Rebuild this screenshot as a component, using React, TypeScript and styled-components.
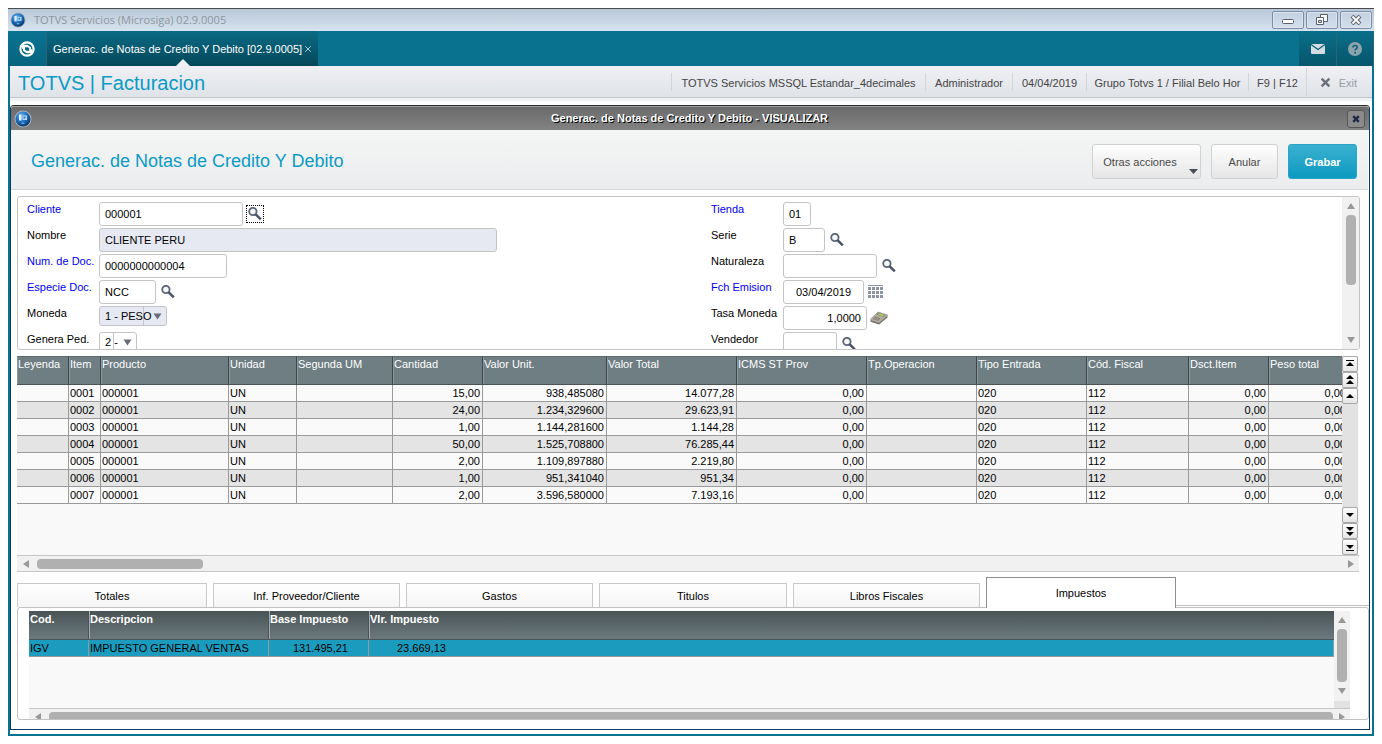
import React from "react";
import styled, { createGlobalStyle, css } from "styled-components";

const GlobalStyle = createGlobalStyle`
  *, *::before, *::after { box-sizing: border-box; }
  body {
    margin: 8px;
    background: #fff;
    color: #000;
    font-family: "Liberation Sans", Arial, Helvetica, sans-serif;
    font-size: 11px;
    line-height: 16px;
  }
  button, input, select {
    margin: 0;
    padding: 0;
    font: inherit;
    color: inherit;
    border-radius: 0;
  }
  button { cursor: pointer; }
  h1, h2 { margin: 0; font-weight: normal; }
  svg { display: block; flex: none; }
`;

/* ---------- window frame ---------- */

const Window = styled.div`
  border-top: 1px solid #4a4d50;
  min-width: 900px;
`;

const TitleBar = styled.header`
  display: flex;
  align-items: center;
  height: 22px;
  padding: 0 2px;
  background: linear-gradient(#b9c8d7, #d6e3f0);
`;

const TitleText = styled.span`
  flex: 1;
  margin-left: 8px;
  color: #8f969e;
  font-family: "Open Sans", "Noto Sans", sans-serif;
  font-size: 11px;
`;

const WindowControls = styled.div`
  display: flex;
  gap: 2px;
`;

const ControlButton = styled.button`
  display: flex;
  align-items: center;
  justify-content: center;
  width: 32px;
  height: 18px;
  border: 1px solid #7d8ba5;
  border-radius: 2px;
  background: linear-gradient(#c3d0df, #d3dfec);
  box-shadow: inset 0 0 0 1px #dde6f0;
`;

const TabBar = styled.nav`
  display: flex;
  align-items: stretch;
  height: 35px;
  background: #09728f;
`;

const BarButton = styled.button<{ $width: number; $dark?: boolean }>`
  display: flex;
  align-items: center;
  justify-content: center;
  width: ${(p) => p.$width}px;
  border: 0;
  border-right: 1px solid #2a6478;
  background: ${(p) => (p.$dark ? "linear-gradient(#0a6e89, #06566c)" : "linear-gradient(#0a7391, #07647f)")};
`;

const ProgramTab = styled.div`
  position: relative;
  display: flex;
  align-items: center;
  width: 271px;
  padding-left: 6px;
  background: linear-gradient(#0a6a84, #06485a);
  color: #fff;
  white-space: nowrap;

  &::after {
    content: "";
    position: absolute;
    left: 50%;
    bottom: 0;
    margin-left: -7px;
    border: 7px solid transparent;
    border-top: 0;
    border-bottom-color: #f0f1f4;
  }
`;

const TabClose = styled.button`
  display: flex;
  align-items: center;
  flex: none;
  height: 12px;
  margin-left: auto;
  margin-right: 6px;
  border: 0;
  background: none;
  color: #b9d0d8;
`;

const Spacer = styled.div`
  flex: 1;
`;

const Frame = styled.main`
  border: 2px solid #09728f;
  border-top: 0;
  padding-bottom: 4px;
`;

const ModuleBar = styled.div`
  display: flex;
  align-items: stretch;
  height: 35px;
  padding: 0 0 3px;
  background: #f0f1f3;
`;

const ModuleBarInner = styled.div`
  display: flex;
  flex: 1;
  align-items: center;
  padding-left: 8px;
  border-bottom: 1px solid #c0c6cc;
  background: linear-gradient(#f0f0f4, #dfe3e8);
`;

const ModuleTitle = styled.h1`
  flex: 1;
  padding-top: 2px;
  color: #0b9bc4;
  font-size: 20px;
  line-height: 24px;
  white-space: nowrap;
`;

const StatusItem = styled.span<{ $width: number }>`
  min-width: ${(p) => p.$width}px;
  height: 18px;
  line-height: 20px;
  border-left: 1px solid #d3d6d9;
  text-align: center;
  color: #444;
  white-space: nowrap;
`;

const ExitButton = styled.button`
  display: flex;
  align-items: center;
  justify-content: space-between;
  width: 66px;
  height: 28px;
  padding: 2px 15px 0 13px;
  border: 0;
  border-left: 1px solid #d3d6d9;
  background: none;
  color: #999da3;
`;

/* ---------- dialog ---------- */

const Dialog = styled.section`
  margin: 4px 2px 0 0;
  border: 1px solid #0b3a66;
  border-top-color: #2d2d2d;
  border-radius: 4px 4px 0 0;
  padding-bottom: 9px;
`;

const DialogBar = styled.div`
  display: flex;
  align-items: center;
  height: 24px;
  padding: 0 4px 0 3px;
  border-top: 1px solid #a0a0a0;
  border-radius: 3px 3px 0 0;
  background: linear-gradient(#6b6b6b, #828282);
`;

const DialogCaption = styled.span`
  flex: 1;
  line-height: 14px;
  padding-bottom: 2px;
  text-align: center;
  color: #fff;
  font-weight: bold;
  text-shadow: 1px 1px 0 #000;
`;

const DialogClose = styled.button`
  display: flex;
  align-items: center;
  justify-content: center;
  width: 18px;
  height: 18px;
  border: 1px solid #555;
  border-radius: 3px;
  background: #8b8b8b;
`;

const DialogHeader = styled.div`
  display: flex;
  align-items: center;
  gap: 10px;
  height: 60px;
  margin-right: 1px;
  padding: 0 11px 0 20px;
  border-bottom: 1px solid #d5d6d8;
  background: linear-gradient(#f4f6f5, #ebecee);
`;

const DialogTitle = styled.h2`
  flex: 1;
  padding-top: 2px;
  color: #0b9bc4;
  font-size: 18px;
  line-height: 24px;
`;

const ActionButton = styled.button<{ $width: number; $primary?: boolean; $menu?: boolean }>`
  position: relative;
  width: ${(p) => p.$width}px;
  height: 35px;
  margin-top: 4px;
  border: 1px solid #d0d1d2;
  border-radius: 3px;
  background: linear-gradient(#fefefe, #e6e6e6);
  color: #4a4a4a;
  ${(p) => p.$menu && css`padding-right: 13px;`}
  ${(p) =>
    p.$primary &&
    css`
      border-color: #2aa3c6;
      background: linear-gradient(#3bb0d0, #0c9ac0);
      color: #fff;
      font-weight: bold;
    `}
`;

const MenuMark = styled.svg`
  position: absolute;
  right: 2px;
  bottom: 4px;
`;

const Body = styled.div`
  padding: 6px 0 0 6px;
`;

/* ---------- form ---------- */

const FormBox = styled.form`
  display: flex;
  height: 154px;
  margin-right: 9px;
  border: 1px solid #c2c4c6;
  border-radius: 3px;
  overflow: hidden;
`;

const FormGrid = styled.div`
  display: grid;
  flex: 1;
  grid-template-columns: minmax(0, 684px) 1fr;
  padding: 5px 0 0 9px;
`;

const FormColumn = styled.div`
  display: flex;
  flex-direction: column;
  gap: 2px;
`;

const FieldRow = styled.div`
  display: flex;
  flex: none;
  height: 24px;
`;

const FieldLabel = styled.label<{ $required?: boolean }>`
  width: 72px;
  line-height: 14px;
  white-space: nowrap;
  color: ${(p) => (p.$required ? "#0000f0" : "#000")};
`;

const FieldControls = styled.div`
  display: flex;
  align-items: center;
  align-self: flex-start;
  gap: 3px;
`;

const TextBox = styled.input<{ $width: number; $align?: string }>`
  width: ${(p) => p.$width}px;
  height: 24px;
  padding: 0 5px;
  border: 1px solid #c2c4c6;
  border-radius: 3px;
  background: ${(p) => (p.readOnly ? "#e6e9f2" : "#fff")};
  text-align: ${(p) => p.$align ?? "left"};
`;

const SelectWrap = styled.span<{ $width: number }>`
  position: relative;
  width: ${(p) => p.$width}px;
  height: 20px;
`;

const SelectBox = styled.select<{ $split: number; $shaded?: boolean }>`
  width: 100%;
  height: 20px;
  padding: 0 5px;
  appearance: none;
  border: 1px solid #c2c4c6;
  border-radius: 3px;
  background-color: ${(p) => (p.$shaded ? "#e6e9f2" : "#fff")};
  background-image: linear-gradient(#c2c4c6, #c2c4c6);
  background-repeat: no-repeat;
  background-size: 1px 100%;
  background-position: ${(p) => p.$split}px 0;
`;

const SelectMark = styled.svg`
  position: absolute;
  right: 5px;
  top: 7px;
  pointer-events: none;
`;

const IconButton = styled.button<{ $focused?: boolean }>`
  display: flex;
  align-items: center;
  justify-content: center;
  width: 18px;
  height: 18px;
  border: 1px dotted ${(p) => (p.$focused ? "#000" : "transparent")};
  background: none;
`;

/* ---------- scroll bars ---------- */

const VTrack = styled.div<{ $width: number }>`
  display: flex;
  flex: none;
  flex-direction: column;
  align-items: center;
  width: ${(p) => p.$width}px;
  background: #f1f1f1;
`;

const HTrack = styled.div`
  display: flex;
  flex: none;
  align-items: center;
  height: 17px;
  border-top: 1px solid #c6c6c6;
  border-bottom: 1px solid #c6c6c6;
  background: #f1f1f1;
`;

const ArrowButton = styled.button`
  display: flex;
  flex: none;
  align-items: center;
  justify-content: center;
  width: 17px;
  height: 18px;
  border: 0;
  background: none;
  color: #989898;
`;

const VThumb = styled.div<{ $size: number }>`
  width: 10px;
  height: ${(p) => p.$size}px;
  border-radius: 4px;
  background: #b0b0b0;
`;

const TrackCorner = styled.div`
  flex: 1;
  align-self: stretch;
  margin-top: 1px;
  background: #e2e2e2;
`;

const HThumb = styled.div<{ $size?: number }>`
  ${(p) => (p.$size ? css`width: ${p.$size}px;` : css`flex: 1;`)}
  height: 10px;
  margin-left: 3px;
  border-radius: 4px;
  background: #b0b0b0;
`;

/* ---------- item grid ---------- */

const ItemGrid = styled.div`
  margin: 6px 10px 0 0;
`;

const ItemArea = styled.div`
  display: flex;
  height: 199px;
  padding-right: 1px;
  background: #f9f9f9;
`;

const TableClip = styled.div`
  flex: 1;
  min-width: 0;
  overflow: hidden;
`;

const ItemTable = styled.table`
  width: 1332px;
  table-layout: fixed;
  border-collapse: separate;
  border-spacing: 0;
`;

const ItemHead = styled.th`
  height: 29px;
  padding: 0 0 0 1px;
  border-top: 1px solid #5d6b6f;
  border-right: 1px solid #3e4548;
  border-bottom: 1px solid #4b5356;
  background: #6e7e83;
  box-shadow: inset 1px 0 0 #8b989c;
  color: #fff;
  line-height: 14px;
  font-weight: normal;
  text-align: left;
  vertical-align: top;
  white-space: nowrap;
`;

const ItemRow = styled.tr`
  background: #fafafa;
  &:nth-child(even) { background: #e4e4e4; }
`;

const ItemCell = styled.td<{ $numeric?: boolean }>`
  height: 17px;
  padding: 0 2px 0 1px;
  border-right: 1px solid #9a9a9a;
  border-bottom: 1px solid #9a9a9a;
  text-align: ${(p) => (p.$numeric ? "right" : "left")};
  white-space: nowrap;
`;

const StepColumn = styled.div`
  display: flex;
  flex: none;
  flex-direction: column;
  width: 16px;
  background: #e2e2e2;
`;

const StepButton = styled.button`
  display: flex;
  align-items: center;
  justify-content: center;
  width: 16px;
  height: 16px;
  border: 1px solid #a9a9a9;
  border-radius: 2px;
  background: linear-gradient(#fdfdfd, #e6e6e6);
`;

/* ---------- detail tabs ---------- */

const TabStrip = styled.div`
  display: flex;
  align-items: flex-end;
  gap: 6px;
  height: 30px;
  margin-top: 5px;
`;

const DetailTab = styled.button<{ $active?: boolean; $width: number }>`
  flex: 0 1 ${(p) => p.$width}px;
  height: 24px;
  border: 1px solid #c9c9c9;
  border-bottom: 0;
  background: linear-gradient(#fff, #f4f4f4);
  ${(p) =>
    p.$active &&
    css`
      position: relative;
      height: 31px;
      margin-bottom: -1px;
      border-color: #8e8e8e;
      background: #fff;
    `}
`;

const TabLine = styled.div`
  flex: 1;
  margin: 0 0 1px -6px;
  border-bottom: 1px solid #bfbfbf;
`;

const DetailPanel = styled.div`
  height: 113px;
  padding: 3px 18px 0 11px;
  border: 1px solid #c2c2c2;
  border-radius: 3px;
  overflow: hidden;
`;

const TaxArea = styled.div`
  display: flex;
  height: 97px;
  background: #f9f9f9;
`;

const TaxTable = styled.table`
  width: 100%;
  table-layout: fixed;
  border-collapse: separate;
  border-spacing: 0;
`;

const TaxHeadRow = styled.tr`
  background: linear-gradient(#4a5355, #6c7b80);
`;

const TaxHead = styled.th`
  height: 29px;
  padding: 0 0 0 1px;
  border-right: 1px solid #4b5356;
  border-bottom: 1px solid #4b5356;
  color: #fff;
  text-align: left;
  vertical-align: top;
  white-space: nowrap;
  & + & { box-shadow: inset 1px 0 0 #a3abad; }
  &:last-child { border-right: 0; }
`;

const TaxCell = styled.td<{ $inset?: number }>`
  height: 17px;
  padding: 0 ${(p) => p.$inset ?? 0}px 0 1px;
  border-right: 1px solid #8f9c9f;
  border-bottom: 1px solid #9a9a9a;
  background: #1b9cbf;
  text-align: ${(p) => (p.$inset ? "right" : "left")};
  white-space: nowrap;
`;

const LastTaxCell = styled(TaxCell)`
  padding-left: 28px;
`;

/* ---------- drawings ---------- */

const Orb = ({ size, id }: { size: number; id: string }) => (
  <svg width={size} height={size} viewBox="0 0 18 18" aria-hidden="true">
    <defs>
      <radialGradient id={id} cx="0.4" cy="0.3" r="0.75">
        <stop offset="0" stopColor="#6db7f0" />
        <stop offset="0.5" stopColor="#1f6fc0" />
        <stop offset="1" stopColor="#08305f" />
      </radialGradient>
    </defs>
    <circle cx="9" cy="9" r="8.5" fill="#aab4bf" />
    <circle cx="9" cy="9" r="7.5" fill={`url(#${id})`} />
    <path d="M5 4.500h2.500v6H5z" fill="#e4f2fd" />
    <path d="M8.500 5.500H13v4.500H8.500z" fill="#b4d8f5" />
    <path d="M9.500 6.500h2v2h-2z" fill="#2f7cc6" />
    <path d="M7.500 13.200h3" stroke="#7dbbe9" strokeWidth="1.200" />
  </svg>
);

const BrandMark = () => (
  <svg width="16" height="16" viewBox="0 0 16 16" aria-hidden="true">
    <circle cx="8" cy="8" r="6.600" fill="none" stroke="#fff" strokeWidth="2.200" />
    <path d="M3 3.800h5.500l3.500 2.400v4l-3.200-2.400H3z" fill="#fff" />
    <path d="M13 12.200H7.500L4 9.800v-4l3.200 2.400H13z" fill="#fff" />
    <path d="M6 6.300h2.800l1.400 1v2.400H7.400L6 8.700z" fill="#08677f" />
  </svg>
);

const Cross = ({ size, color, width }: { size: number; color: string; width: number }) => (
  <svg width={size} height={size} viewBox="0 0 10 10" aria-hidden="true">
    <path d="M1.500 1.500l7 7M8.500 1.500l-7 7" stroke={color} strokeWidth={width} fill="none" />
  </svg>
);

const Magnifier = () => (
  <svg width="14" height="14" viewBox="0 0 14 14" aria-hidden="true">
    <circle cx="4.900" cy="4.500" r="3.700" fill="#f6f8fb" stroke="#5b6678" strokeWidth="1.800" />
    <path d="M7.500 7.200L12.800 12.300" stroke="#46526a" strokeWidth="2.500" />
  </svg>
);

const CalendarGrid = () => (
  <svg width="16" height="14" viewBox="0 0 16 14" aria-hidden="true">
    <path d="M0 0.500h15" stroke="#8b93a3" />
    {[2, 6, 10].map((y) =>
      [0, 4, 8, 12].map((x) => <rect key={`${x}-${y}`} x={x} y={y} width="3" height="3" fill="#8b93a3" />)
    )}
  </svg>
);

const Calculator = () => (
  <svg width="18" height="14" viewBox="0 0 18 14" aria-hidden="true">
    <path d="M0.500 8L8 0.800l9.500 3v2.700L9 13.500 0.500 10.800z" fill="#77716a" />
    <path d="M0.500 8L8 0.800l9.500 3L9 11z" fill="#b3aca1" />
    <path d="M8.300 1.600l7.500 2.400-2.500 2-7-2.400z" fill="#8d867c" />
    <path d="M9.500 2.400l4.800 1.600-1.600 1.300-4.500-1.600z" fill="#a4dc4e" />
    <path d="M4.500 6l5.500 2M3 7.400l5.500 2M6 5.600L3.500 8M8 6.300L5.500 8.800M10 7L7.500 9.500" stroke="#7d7468" strokeWidth="0.700" />
    <path d="M0.500 8.500L9 11.300l8.500-7" fill="none" stroke="#dcd8d0" strokeWidth="0.600" />
  </svg>
);

const Arrow = ({ dir }: { dir: "up" | "down" | "left" | "right" }) => {
  const turn = { up: 0, right: 90, down: 180, left: 270 }[dir];
  return (
    <svg width="8" height="8" viewBox="0 0 8 8" aria-hidden="true">
      <path d="M4 1l4 6H0z" fill="currentColor" transform={`rotate(${turn} 4 4)`} />
    </svg>
  );
};

const stepShapes = {
  first: "M1 1h8v1H1zM5 3l4 4H1z",
  pageUp: "M5 0l4 4H1zM5 5l4 4H1z",
  up: "M5 3l4 4H1z",
  down: "M5 7l4-4H1z",
  pageDown: "M5 5l4-4H1zM5 10l4-4H1z",
  last: "M1 8h8v1H1zM5 7l4-4H1z",
};

const StepIcon = ({ kind }: { kind: keyof typeof stepShapes }) => (
  <svg width="10" height="10" viewBox="0 0 10 10" aria-hidden="true">
    <path d={stepShapes[kind]} fill="#000" />
  </svg>
);

const Step = ({ kind, label }: { kind: keyof typeof stepShapes; label: string }) => (
  <StepButton type="button" aria-label={label}>
    <StepIcon kind={kind} />
  </StepButton>
);

const Lookup = ({ label, focused }: { label: string; focused?: boolean }) => (
  <IconButton type="button" aria-label={label} $focused={focused}>
    <Magnifier />
  </IconButton>
);

/* ---------- form pieces ---------- */

type FieldProps = {
  id: string;
  label: string;
  required?: boolean;
  children: React.ReactNode;
};

const Field = ({ id, label, required, children }: FieldProps) => (
  <FieldRow>
    <FieldLabel htmlFor={id} $required={required}>
      {label}
    </FieldLabel>
    <FieldControls>{children}</FieldControls>
  </FieldRow>
);

type ChoiceProps = { id: string; width: number; split: number; shaded?: boolean; value: string };

const Choice = ({ id, width, split, shaded, value }: ChoiceProps) => (
  <SelectWrap $width={width}>
    <SelectBox id={id} $split={split} $shaded={shaded} defaultValue={value}>
      <option>{value}</option>
    </SelectBox>
    <SelectMark width="9" height="7" viewBox="0 0 9 7" aria-hidden="true">
      <path d="M0.500 0.500h8L4.500 6.500z" fill="#666c78" />
    </SelectMark>
  </SelectWrap>
);

/* ---------- data ---------- */

const columns = [
  { title: "Leyenda", width: 52 },
  { title: "Item", width: 32 },
  { title: "Producto", width: 128 },
  { title: "Unidad", width: 68 },
  { title: "Segunda UM", width: 96 },
  { title: "Cantidad", width: 90, numeric: true },
  { title: "Valor Unit.", width: 124, numeric: true },
  { title: "Valor Total", width: 130, numeric: true },
  { title: "ICMS ST Prov", width: 130, numeric: true },
  { title: "Tp.Operacion", width: 110 },
  { title: "Tipo Entrada", width: 110 },
  { title: "Cód. Fiscal", width: 102 },
  { title: "Dsct.Item", width: 80, numeric: true },
  { title: "Peso total", width: 80, numeric: true },
];

const items = [
  ["15,00", "938,485080", "14.077,28"],
  ["24,00", "1.234,329600", "29.623,91"],
  ["1,00", "1.144,281600", "1.144,28"],
  ["50,00", "1.525,708800", "76.285,44"],
  ["2,00", "1.109,897880", "2.219,80"],
  ["1,00", "951,341040", "951,34"],
  ["2,00", "3.596,580000", "7.193,16"],
].map(([quantity, unit, total], i) => [
  "", `000${i + 1}`, "000001", "UN", "", quantity, unit, total, "0,00", "", "020", "112", "0,00", "0,00",
]);

const tabs = [
  { title: "Totales", width: 190 },
  { title: "Inf. Proveedor/Cliente", width: 187 },
  { title: "Gastos", width: 187 },
  { title: "Titulos", width: 188 },
  { title: "Libros Fiscales", width: 187 },
  { title: "Impuestos", width: 190 },
];

export default function App() {
  return (
    <>
      <GlobalStyle />
      <Window>
        <TitleBar>
          <Orb size={16} id="orb-window" />
          <TitleText>TOTVS Servicios (Microsiga) 02.9.0005</TitleText>
          <WindowControls>
            <ControlButton type="button" aria-label="Minimizar">
              <svg width="12" height="12" viewBox="0 0 12 12" aria-hidden="true">
                <rect x="0.500" y="5.500" width="11" height="4" rx="1" fill="#fff" stroke="#5a6070" />
              </svg>
            </ControlButton>
            <ControlButton type="button" aria-label="Restaurar">
              <svg width="12" height="12" viewBox="0 0 12 12" aria-hidden="true">
                <path d="M4.500 0.500h7v7h-7z" fill="#fff" stroke="#5a6070" />
                <path d="M0.500 3.500h7v7h-7z" fill="#fff" stroke="#5a6070" />
                <path d="M2.500 6.500h3v2h-3z" fill="#c8d4e2" stroke="#5a6070" />
              </svg>
            </ControlButton>
            <ControlButton type="button" aria-label="Cerrar">
              <svg width="12" height="10" viewBox="0 0 12 10" aria-hidden="true">
                <path d="M2 1l8 8M10 1L2 9" stroke="#5a6070" strokeWidth="4" />
                <path d="M2.500 1.500l7 7M9.500 1.500l-7 7" stroke="#fff" strokeWidth="2" />
              </svg>
            </ControlButton>
          </WindowControls>
        </TitleBar>

        <TabBar>
          <BarButton type="button" aria-label="Inicio" $width={39}>
            <BrandMark />
          </BarButton>
          <ProgramTab>
            Generac. de Notas de Credito Y Debito [02.9.0005]
            <TabClose type="button" aria-label="Cerrar ficha">
              <Cross size={8} color="currentColor" width={1.2} />
            </TabClose>
          </ProgramTab>
          <Spacer />
          <BarButton type="button" aria-label="Mensajes" $width={38} $dark>
            <svg width="14" height="10" viewBox="0 0 14 10" aria-hidden="true">
              <rect width="14" height="10" rx="1" fill="#d5dde3" />
              <path d="M0 0.500L7 5.500 14 0.500" fill="none" stroke="#07637c" strokeWidth="1.300" />
            </svg>
          </BarButton>
          <BarButton type="button" aria-label="Ayuda" $width={37} $dark>
            <svg width="14" height="14" viewBox="0 0 14 14" aria-hidden="true">
              <circle cx="7" cy="7" r="7" fill="#8fa3ad" />
              <path d="M5 5.600c0-2.800 4.200-2.700 4.200-0.300C9.200 6.900 7.100 6.900 7.100 8.600" fill="none" stroke="#07637c" strokeWidth="1.600" />
              <circle cx="7.100" cy="10.700" r="1" fill="#07637c" />
            </svg>
          </BarButton>
        </TabBar>

        <Frame>
          <ModuleBar>
            <ModuleBarInner>
              <ModuleTitle>TOTVS | Facturacion</ModuleTitle>
              <StatusItem $width={254}>TOTVS Servicios MSSQL Estandar_4decimales</StatusItem>
              <StatusItem $width={87}>Administrador</StatusItem>
              <StatusItem $width={74}>04/04/2019</StatusItem>
              <StatusItem $width={162}>Grupo Totvs 1 / Filial Belo Hor</StatusItem>
              <StatusItem $width={58}>F9 | F12</StatusItem>
              <ExitButton type="button">
                <Cross size={11} color="#6a7078" width={2.2} />
                Exit
              </ExitButton>
            </ModuleBarInner>
          </ModuleBar>

          <Dialog aria-label="Generac. de Notas de Credito Y Debito">
            <DialogBar>
              <Orb size={18} id="orb-dialog" />
              <DialogCaption>Generac. de Notas de Credito Y Debito - VISUALIZAR</DialogCaption>
              <DialogClose type="button" aria-label="Cerrar">
                <Cross size={8} color="#1f2a44" width={3} />
              </DialogClose>
            </DialogBar>

            <DialogHeader>
              <DialogTitle>Generac. de Notas de Credito Y Debito</DialogTitle>
              <ActionButton type="button" $width={109} $menu>
                Otras acciones
                <MenuMark width="9" height="5" viewBox="0 0 9 5" aria-hidden="true">
                  <path d="M0 0h9L4.500 5z" fill="#474e5a" />
                </MenuMark>
              </ActionButton>
              <ActionButton type="button" $width={67}>Anular</ActionButton>
              <ActionButton type="button" $width={69} $primary>Grabar</ActionButton>
            </DialogHeader>

            <Body>
              <FormBox>
                <FormGrid>
                  <FormColumn>
                    <Field id="cliente" label="Cliente" required>
                      <TextBox id="cliente" $width={144} defaultValue="000001" />
                      <Lookup label="Buscar cliente" focused />
                    </Field>
                    <Field id="nombre" label="Nombre">
                      <TextBox id="nombre" $width={398} defaultValue="CLIENTE PERU" readOnly />
                    </Field>
                    <Field id="numero" label="Num. de Doc." required>
                      <TextBox id="numero" $width={128} defaultValue="0000000000004" />
                    </Field>
                    <Field id="especie" label="Especie Doc." required>
                      <TextBox id="especie" $width={57} defaultValue="NCC" />
                      <Lookup label="Buscar especie" />
                    </Field>
                    <Field id="moneda" label="Moneda">
                      <Choice id="moneda" width={68} split={43} shaded value="1 - PESO" />
                    </Field>
                    <Field id="pedido" label="Genera Ped.">
                      <Choice id="pedido" width={38} split={13} value="2 -" />
                    </Field>
                  </FormColumn>
                  <FormColumn>
                    <Field id="tienda" label="Tienda" required>
                      <TextBox id="tienda" $width={28} defaultValue="01" />
                    </Field>
                    <Field id="serie" label="Serie">
                      <TextBox id="serie" $width={42} defaultValue="B" />
                      <Lookup label="Buscar serie" />
                    </Field>
                    <Field id="naturaleza" label="Naturaleza">
                      <TextBox id="naturaleza" $width={94} defaultValue="" />
                      <Lookup label="Buscar naturaleza" />
                    </Field>
                    <Field id="emision" label="Fch Emision" required>
                      <TextBox id="emision" $width={81} $align="center" defaultValue="03/04/2019" />
                      <IconButton type="button" aria-label="Abrir calendario">
                        <CalendarGrid />
                      </IconButton>
                    </Field>
                    <Field id="tasa" label="Tasa Moneda">
                      <TextBox id="tasa" $width={84} $align="right" defaultValue="1,0000" />
                      <IconButton type="button" aria-label="Abrir calculadora">
                        <Calculator />
                      </IconButton>
                    </Field>
                    <Field id="vendedor" label="Vendedor">
                      <TextBox id="vendedor" $width={54} defaultValue="" />
                      <Lookup label="Buscar vendedor" />
                    </Field>
                  </FormColumn>
                </FormGrid>
                <VTrack $width={17}>
                  <ArrowButton type="button" aria-label="Subir"><Arrow dir="up" /></ArrowButton>
                  <VThumb $size={70} />
                  <Spacer />
                  <ArrowButton type="button" aria-label="Bajar"><Arrow dir="down" /></ArrowButton>
                </VTrack>
              </FormBox>

              <ItemGrid>
                <ItemArea>
                  <TableClip>
                    <ItemTable>
                      <colgroup>
                        {columns.map((c) => (
                          <col key={c.title} width={c.width} />
                        ))}
                      </colgroup>
                      <thead>
                        <tr>
                          {columns.map((c) => (
                            <ItemHead key={c.title} scope="col">{c.title}</ItemHead>
                          ))}
                        </tr>
                      </thead>
                      <tbody>
                        {items.map((row) => (
                          <ItemRow key={row[1]}>
                            {row.map((value, i) => (
                              <ItemCell key={columns[i].title} $numeric={columns[i].numeric}>{value}</ItemCell>
                            ))}
                          </ItemRow>
                        ))}
                      </tbody>
                    </ItemTable>
                  </TableClip>
                  <StepColumn>
                    <Step kind="first" label="Primera linea" />
                    <Step kind="pageUp" label="Pagina anterior" />
                    <Step kind="up" label="Linea anterior" />
                    <Spacer />
                    <Step kind="down" label="Linea siguiente" />
                    <Step kind="pageDown" label="Pagina siguiente" />
                    <Step kind="last" label="Ultima linea" />
                  </StepColumn>
                </ItemArea>
                <HTrack>
                  <ArrowButton type="button" aria-label="Izquierda"><Arrow dir="left" /></ArrowButton>
                  <HThumb $size={166} />
                  <Spacer />
                  <ArrowButton type="button" aria-label="Derecha"><Arrow dir="right" /></ArrowButton>
                </HTrack>
              </ItemGrid>

              <TabStrip role="tablist">
                {tabs.map((t) => {
                  const active = t.title === "Impuestos";
                  return (
                    <DetailTab
                      key={t.title}
                      type="button"
                      role="tab"
                      aria-selected={active}
                      $active={active}
                      $width={t.width}
                    >
                      {t.title}
                    </DetailTab>
                  );
                })}
                <TabLine />
              </TabStrip>

              <DetailPanel role="tabpanel">
                <TaxArea>
                  <TableClip>
                    <TaxTable>
                      <colgroup>
                        <col width={60} />
                        <col width={180} />
                        <col width={100} />
                        <col />
                      </colgroup>
                      <thead>
                        <TaxHeadRow>
                          <TaxHead scope="col">Cod.</TaxHead>
                          <TaxHead scope="col">Descripcion</TaxHead>
                          <TaxHead scope="col">Base Impuesto</TaxHead>
                          <TaxHead scope="col">Vlr. Impuesto</TaxHead>
                        </TaxHeadRow>
                      </thead>
                      <tbody>
                        <tr>
                          <TaxCell>IGV</TaxCell>
                          <TaxCell>IMPUESTO GENERAL VENTAS</TaxCell>
                          <TaxCell $inset={20}>131.495,21</TaxCell>
                          <LastTaxCell>23.669,13</LastTaxCell>
                        </tr>
                      </tbody>
                    </TaxTable>
                  </TableClip>
                  <VTrack $width={16}>
                    <ArrowButton type="button" aria-label="Subir"><Arrow dir="up" /></ArrowButton>
                    <VThumb $size={53} />
                    <ArrowButton type="button" aria-label="Bajar"><Arrow dir="down" /></ArrowButton>
                    <TrackCorner />
                  </VTrack>
                </TaxArea>
                <HTrack>
                  <ArrowButton type="button" aria-label="Izquierda"><Arrow dir="left" /></ArrowButton>
                  <HThumb />
                  <ArrowButton type="button" aria-label="Derecha"><Arrow dir="right" /></ArrowButton>
                </HTrack>
              </DetailPanel>
            </Body>
          </Dialog>
        </Frame>
      </Window>
    </>
  );
}
